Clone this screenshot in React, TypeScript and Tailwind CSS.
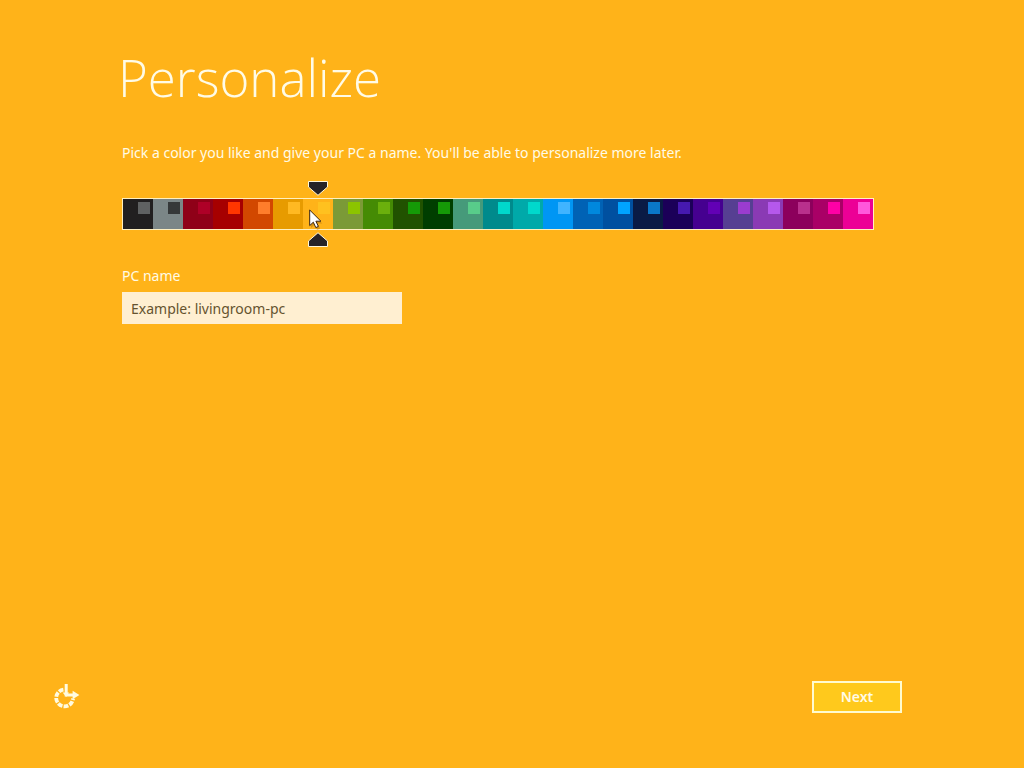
import { useState } from 'react'

type Scheme = {
  name: string
  base: string
  accent: string
}

const SCHEMES: Scheme[] = [
  { name: 'Charcoal', base: 'bg-[#211f20]', accent: 'bg-[#5f6162]' },
  { name: 'Slate', base: 'bg-[#7b8687]', accent: 'bg-[#353839]' },
  { name: 'Crimson', base: 'bg-[#8f0018]', accent: 'bg-[#ae0027]' },
  { name: 'Red', base: 'bg-[#a60000]', accent: 'bg-[#ff3600]' },
  { name: 'Orange', base: 'bg-[#d24800]', accent: 'bg-[#ff7d2b]' },
  { name: 'Amber', base: 'bg-[#e79b00]', accent: 'bg-[#ffb922]' },
  { name: 'Yellow', base: 'bg-[#ffb319]', accent: 'bg-[#ffc11f]' },
  { name: 'Olive', base: 'bg-[#7b9a37]', accent: 'bg-[#8cc400]' },
  { name: 'Green', base: 'bg-[#458b04]', accent: 'bg-[#6bb00c]' },
  { name: 'Forest', base: 'bg-[#215200]', accent: 'bg-[#159a07]' },
  { name: 'Dark green', base: 'bg-[#003e00]', accent: 'bg-[#159a07]' },
  { name: 'Sea green', base: 'bg-[#469a7a]', accent: 'bg-[#58cc8a]' },
  { name: 'Teal', base: 'bg-[#008a8c]', accent: 'bg-[#00d8cc]' },
  { name: 'Turquoise', base: 'bg-[#00a9a9]', accent: 'bg-[#00d8cc]' },
  { name: 'Sky', base: 'bg-[#0096f4]', accent: 'bg-[#40b4ff]' },
  { name: 'Blue', base: 'bg-[#0062b5]', accent: 'bg-[#0088dd]' },
  { name: 'Cobalt', base: 'bg-[#0050a0]', accent: 'bg-[#00a4ff]' },
  { name: 'Navy', base: 'bg-[#0a1b45]', accent: 'bg-[#0a78c8]' },
  { name: 'Indigo', base: 'bg-[#1b0058]', accent: 'bg-[#4619b0]' },
  { name: 'Violet', base: 'bg-[#450090]', accent: 'bg-[#6200b5]' },
  { name: 'Dusk', base: 'bg-[#563f92]', accent: 'bg-[#9b3ccf]' },
  { name: 'Purple', base: 'bg-[#8a3ab4]', accent: 'bg-[#b558ec]' },
  { name: 'Plum', base: 'bg-[#8c005c]', accent: 'bg-[#b9308c]' },
  { name: 'Raspberry', base: 'bg-[#a90066]', accent: 'bg-[#ff00a6]' },
  { name: 'Pink', base: 'bg-[#ec0096]', accent: 'bg-[#ff58dc]' },
]

function Marker({ className }: { className: string }) {
  return (
    <svg className={className} width="20" height="15" viewBox="0 0 20 15" aria-hidden="true">
      <path d="M.5 .5h19v5.5L10 14.3 .5 6z" fill="#262328" stroke="#fff6d8" />
    </svg>
  )
}

function Pointer() {
  return (
    <svg
      className="pointer-events-none absolute top-2.5 left-1.5 z-10"
      width="14"
      height="22"
      viewBox="0 0 14 22"
      aria-hidden="true"
    >
      <path d="M2 3v16l3.6-3.4 2.5 5.3 3-1.3-2.6-5h4.8z" fill="#7a4a00" opacity=".3" />
      <path
        d="M.7 1v15.6l3.6-3.4 2.5 5.4 2.6-1.2-2.5-5.2h5z"
        fill="#fff"
        stroke="#3a2410"
        strokeLinejoin="round"
      />
    </svg>
  )
}

function EaseOfAccessIcon() {
  return (
    <svg width="26" height="26" viewBox="0 1 26 26" fill="none" stroke="#fffbe0" aria-hidden="true">
      {/* dashed ring, open at the upper right */}
      <path
        d="M9.4 6.6A8.4 8.4 0 1 0 19 15.5"
        strokeWidth="3.8"
        strokeDasharray="4.8 1.2"
      />
      <path d="M12.2 1V12H20" strokeWidth="3" />
      <path d="M18.6 7.8L25.4 12 18.6 16.2z" fill="#fffbe0" stroke="none" />
      <path d="M8.6 9.6L15 9.6 12.2 14z" fill="#fffbe0" stroke="none" />
    </svg>
  )
}

export default function App() {
  const [selected, setSelected] = useState(6)
  const [pcName, setPcName] = useState('')

  return (
    <div className="flex min-h-screen flex-col bg-[#ffb319] font-['Noto_Sans','Open_Sans',sans-serif] text-sm text-[#fffbe6]">
      <main className="flex-1 px-[122px] pt-10">
        <h1 className="-ml-1 font-['Open_Sans','Noto_Sans',sans-serif] text-[51px] leading-[74px] font-light">
          Personalize
        </h1>
        <p className="mt-[29px] leading-5">
          Pick a color you like and give your PC a name. You'll be able to personalize more later.
        </p>

        {/* Color strip */}
        <div
          role="radiogroup"
          aria-label="Color"
          className="mt-[35px] flex w-fit border border-[#fff0c0]"
        >
          {SCHEMES.map((scheme, i) => (
            <label key={scheme.name} className={`relative block h-[30px] w-[30px] ${scheme.base}`}>
              <input
                type="radio"
                name="color"
                aria-label={scheme.name}
                checked={selected === i}
                onChange={() => setSelected(i)}
                className="absolute inset-0 appearance-none"
              />
              <span className={`absolute top-[3px] right-[3px] h-3 w-3 ${scheme.accent}`} />
              {selected === i && (
                <>
                  <Marker className="absolute bottom-full left-[5px] mb-[3px]" />
                  <Marker className="absolute top-full left-[5px] mt-[3px] rotate-180" />
                  <Pointer />
                </>
              )}
            </label>
          ))}
        </div>

        {/* PC name */}
        <div className="mt-9 flex flex-col items-start">
          <label htmlFor="pc-name" className="leading-5">
            PC name
          </label>
          <input
            id="pc-name"
            type="text"
            value={pcName}
            onChange={(e) => setPcName(e.target.value)}
            placeholder="Example: livingroom-pc"
            className="mt-1.5 h-8 w-[280px] bg-[#ffefd1] px-[9px] text-[#4a3a1c] outline-none placeholder:text-[#65532f]"
          />
        </div>
      </main>

      <footer className="flex items-center justify-between pr-[122px] pb-[55px] pl-[54px]">
        <button type="button" aria-label="Ease of access">
          <EaseOfAccessIcon />
        </button>
        <button
          type="button"
          className="h-8 w-[90px] border-2 border-[#fffbd0] bg-[#ffc91c] font-semibold"
        >
          Next
        </button>
      </footer>
    </div>
  )
}
